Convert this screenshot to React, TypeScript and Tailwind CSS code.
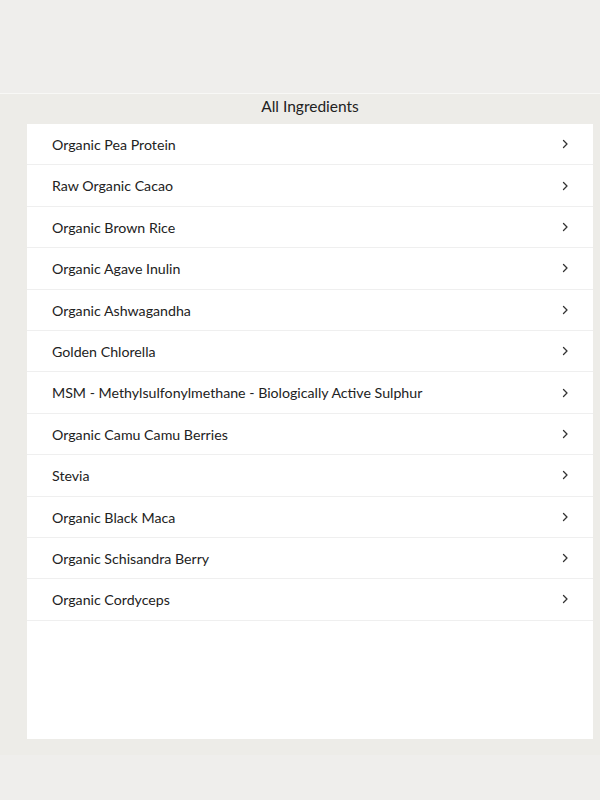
const ingredients = [
  "Organic Pea Protein",
  "Raw Organic Cacao",
  "Organic Brown Rice",
  "Organic Agave Inulin",
  "Organic Ashwagandha",
  "Golden Chlorella",
  "MSM - Methylsulfonylmethane - Biologically Active Sulphur",
  "Organic Camu Camu Berries",
  "Stevia",
  "Organic Black Maca",
  "Organic Schisandra Berry",
  "Organic Cordyceps",
];

function Chevron() {
  return (
    <svg width="8" height="12" viewBox="0 0 8 12" fill="none">
      <path d="M2.5 2.5l3.5 3.5-3.5 3.5" stroke="#333" strokeWidth="1.3" strokeLinecap="round" strokeLinejoin="round" />
    </svg>
  );
}

export default function App() {
  return (
    <div className="w-[600px] h-[800px] flex flex-col bg-[#edece8] text-[#222]" style={{ fontFamily: "Lato, 'Noto Sans', sans-serif" }}>
      <div className="h-[94px] shrink-0 bg-[#efeeec] border-b border-[#f8f8f6]" />
      <div className="h-[30px] shrink-0 flex items-start justify-center pt-[1px] pl-[20px] text-[15.5px] text-[#222]">
        All Ingredients
      </div>
      <div className="ml-[27px] mr-[7px] h-[615px] shrink-0 bg-white">
        <ul>
          {ingredients.map((name) => (
            <li key={name} className="h-[41.4px] flex items-center justify-between pl-[25px] pr-[24px] border-b border-[#efefef] text-[14.2px]">
              <span className="pt-[1px]">{name}</span>
              <Chevron />
            </li>
          ))}
        </ul>
      </div>
      <div className="h-[16px] shrink-0" />
      <div className="flex-1 bg-[#efeeec]" />
    </div>
  );
}
